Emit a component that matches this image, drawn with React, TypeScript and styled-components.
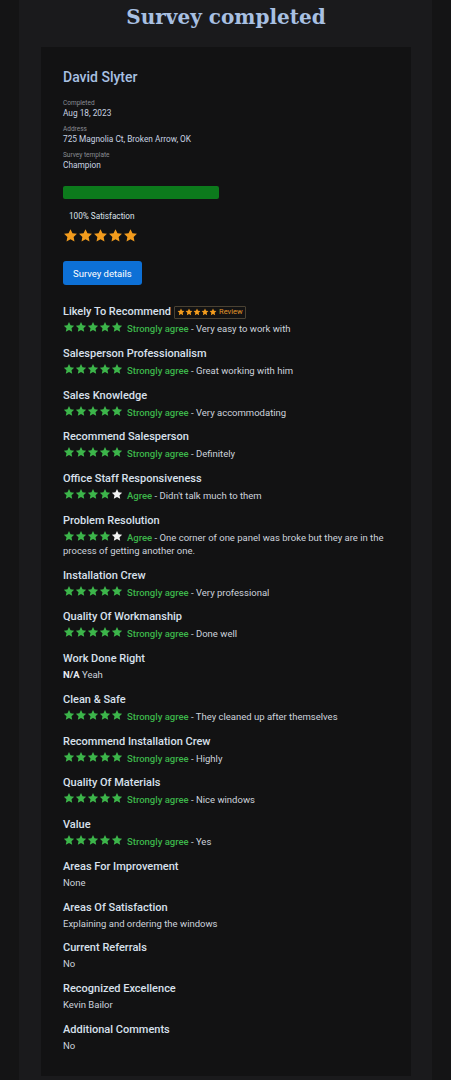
import styled, { createGlobalStyle } from "styled-components";

const GlobalStyle = createGlobalStyle`
  html, body {
    margin: 0;
    padding: 0;
    background: #141415;
  }
  * {
    box-sizing: border-box;
  }
`;

type Answer = {
  title: string;
  stars?: number;
  level?: string;
  na?: boolean;
  text: string;
  badge?: boolean;
};

const answers: Answer[] = [
  { title: "Likely To Recommend", stars: 5, level: "Strongly agree", text: "Very easy to work with", badge: true },
  { title: "Salesperson Professionalism", stars: 5, level: "Strongly agree", text: "Great working with him" },
  { title: "Sales Knowledge", stars: 5, level: "Strongly agree", text: "Very accommodating" },
  { title: "Recommend Salesperson", stars: 5, level: "Strongly agree", text: "Definitely" },
  { title: "Office Staff Responsiveness", stars: 4, level: "Agree", text: "Didn't talk much to them" },
  {
    title: "Problem Resolution",
    stars: 4,
    level: "Agree",
    text: "One corner of one panel was broke but they are in the process of getting another one.",
  },
  { title: "Installation Crew", stars: 5, level: "Strongly agree", text: "Very professional" },
  { title: "Quality Of Workmanship", stars: 5, level: "Strongly agree", text: "Done well" },
  { title: "Work Done Right", na: true, text: "Yeah" },
  { title: "Clean & Safe", stars: 5, level: "Strongly agree", text: "They cleaned up after themselves" },
  { title: "Recommend Installation Crew", stars: 5, level: "Strongly agree", text: "Highly" },
  { title: "Quality Of Materials", stars: 5, level: "Strongly agree", text: "Nice windows" },
  { title: "Value", stars: 5, level: "Strongly agree", text: "Yes" },
  { title: "Areas For Improvement", text: "None" },
  { title: "Areas Of Satisfaction", text: "Explaining and ordering the windows" },
  { title: "Current Referrals", text: "No" },
  { title: "Recognized Excellence", text: "Kevin Bailor" },
  { title: "Additional Comments", text: "No" },
];

const Star = ({ size, color }: { size: number; color: string }) => (
  <StarSvg width={size} height={size} viewBox="0 0 24 24">
    <path
      fill={color}
      d="M12 1.8l3.1 6.6 7.2.9-5.3 5 1.4 7.1L12 17.9l-6.4 3.5 1.4-7.1-5.3-5 7.2-.9z"
    />
  </StarSvg>
);

const Stars = ({ count, size, color, empty }: { count: number; size: number; color: string; empty?: string }) => (
  <StarGroup>
    {[0, 1, 2, 3, 4].map((i) => (
      <Star key={i} size={size} color={i < count ? color : empty || color} />
    ))}
  </StarGroup>
);

const App = () => {
  return (
    <>
      <GlobalStyle />
      <Page>
        <Column>
          <Title>Survey completed</Title>
          <Card>
            <Name>David Slyter</Name>
            <Meta>
              <MetaLabel>Completed</MetaLabel>
              <MetaValue>Aug 18, 2023</MetaValue>
            </Meta>
            <Meta>
              <MetaLabel>Address</MetaLabel>
              <MetaValue>725 Magnolia Ct, Broken Arrow, OK</MetaValue>
            </Meta>
            <Meta>
              <MetaLabel>Survey template</MetaLabel>
              <MetaValue>Champion</MetaValue>
            </Meta>
            <Progress>
              <ProgressFill style={{ width: "100%" }} />
            </Progress>
            <Satisfaction>100% Satisfaction</Satisfaction>
            <Stars count={5} size={15} color="#f39c1d" />
            <DetailsButton>Survey details</DetailsButton>

            <Answers>
              {answers.map((a) => (
                <Question key={a.title}>
                  <QuestionTitle>
                    {a.title}
                    {a.badge && (
                      <ReviewBadge>
                        <Stars count={5} size={8} color="#f39c1d" />
                        <span>Review</span>
                      </ReviewBadge>
                    )}
                  </QuestionTitle>
                  <AnswerLine>
                    {a.stars !== undefined && (
                      <>
                        <Stars count={a.stars} size={12} color="#3cb54a" empty="#f2f2f2" />
                        <Level>{a.level}</Level>
                        {" - "}
                      </>
                    )}
                    {a.na && <Na>N/A </Na>}
                    {a.text}
                  </AnswerLine>
                </Question>
              ))}
            </Answers>
          </Card>
        </Column>
      </Page>
    </>
  );
};

const Page = styled.div`
  width: 451px;
  min-height: 1080px;
  background: #141415;
  font-family: Roboto, "Liberation Sans", sans-serif;
`;

const Column = styled.div`
  margin: 0 19px;
  min-height: 1080px;
  background: #1a1a1c;
  padding: 0 21px 0 22px;
`;

const Title = styled.h1`
  margin: 0;
  padding-top: 3px;
  height: 47px;
  text-align: center;
  font-family: "DejaVu Serif", "Liberation Serif", serif;
  font-weight: bold;
  font-size: 20px;
  line-height: 28px;
  color: #a8c0e2;
`;

const Card = styled.div`
  background: #121213;
  padding: 22px 22px 24px 22px;
`;

const Name = styled.div`
  font-size: 14px;
  font-weight: 500;
  color: #a8c0e2;
  line-height: 16px;
  margin-bottom: 14px;
`;

const Meta = styled.div`
  display: flex;
  flex-direction: column;
  margin-bottom: 6px;
`;

const MetaLabel = styled.span`
  font-size: 6.5px;
  line-height: 9px;
  color: #8a8d93;
`;

const MetaValue = styled.span`
  font-size: 8.3px;
  line-height: 11px;
  color: #c8d2e2;
`;

const Progress = styled.div`
  width: 156px;
  height: 13px;
  margin-top: 15px;
  border-radius: 2px;
  background: #0b3d12;
  overflow: hidden;
`;

const ProgressFill = styled.div`
  height: 100%;
  background: #0c7a1c;
`;

const Satisfaction = styled.div`
  margin: 12px 0 6px 6px;
  font-size: 8.2px;
  line-height: 10px;
  color: #dde2ea;
`;

const StarGroup = styled.span`
  display: inline-flex;
  align-items: center;
  vertical-align: -1px;
`;

const StarSvg = styled.svg`
  display: block;
`;

const DetailsButton = styled.button`
  display: block;
  margin-top: 15px;
  height: 24px;
  padding: 0 10px;
  border: none;
  border-radius: 3px;
  background: #0d70d6;
  color: #ffffff;
  font-family: Roboto, "Liberation Sans", sans-serif;
  font-size: 9.5px;
`;

const Answers = styled.div`
  display: flex;
  flex-direction: column;
  gap: 11.75px;
  margin-top: 20px;
`;

const Question = styled.div`
  display: flex;
  flex-direction: column;
  gap: 2px;
`;

const QuestionTitle = styled.div`
  display: flex;
  align-items: center;
  font-size: 11px;
  font-weight: 500;
  line-height: 14px;
  color: #d8e0ec;
`;

const ReviewBadge = styled.span`
  display: inline-flex;
  align-items: center;
  gap: 2px;
  margin-left: 3px;
  height: 13px;
  padding: 0 2px;
  border: 1px solid #4a4233;
  border-radius: 1px;
  font-size: 7.5px;
  font-weight: 400;
  color: #e0962a;
`;

const AnswerLine = styled.div`
  font-size: 9.5px;
  line-height: 13px;
  color: #cdd3dc;
`;

const Level = styled.span`
  margin-left: 4px;
  color: #3cb54a;
  font-weight: 500;
`;

const Na = styled.span`
  font-weight: 700;
  color: #e8edf4;
`;

export default App;
